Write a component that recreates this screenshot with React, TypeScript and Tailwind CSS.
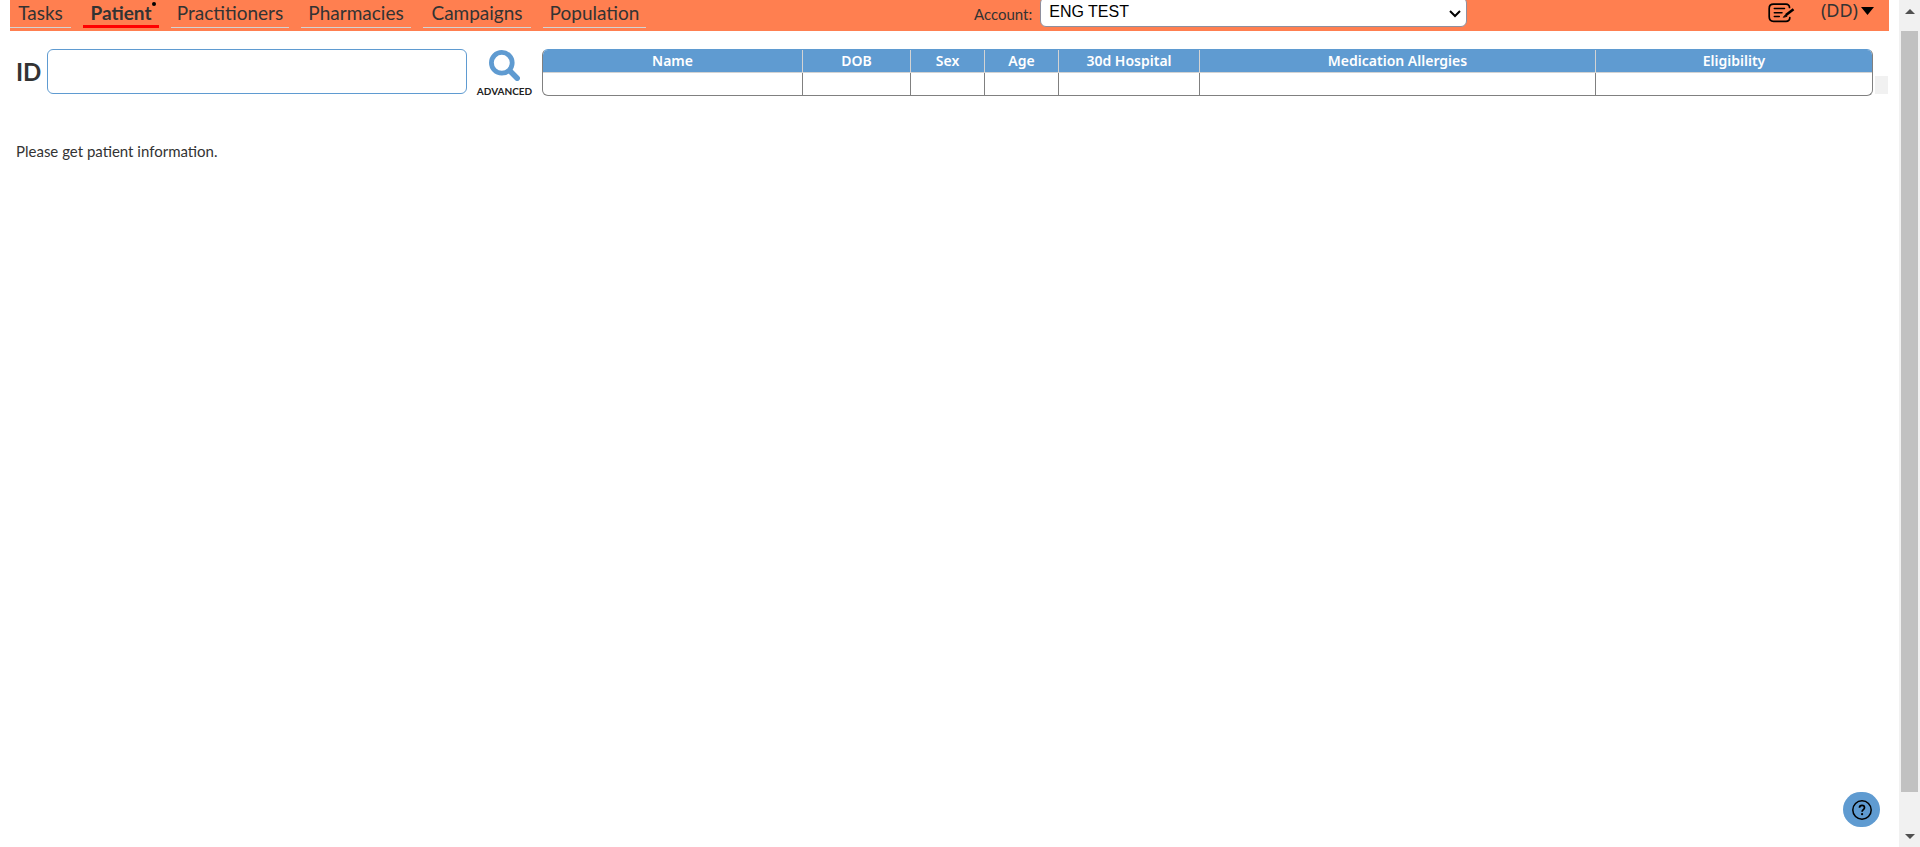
import { useState } from "react";

const tabs = [
  { name: "Tasks", width: "w-[61px]" },
  { name: "Patient", width: "w-[76px]" },
  { name: "Practitioners", width: "w-[118px]" },
  { name: "Pharmacies", width: "w-[110px]" },
  { name: "Campaigns", width: "w-[108px]" },
  { name: "Population", width: "w-[103px]" },
];

const columns = [
  { name: "Name", width: "w-[259px]" },
  { name: "DOB", width: "w-[108px]" },
  { name: "Sex", width: "w-[74px]" },
  { name: "Age", width: "w-[74px]" },
  { name: "30d Hospital", width: "w-[141px]" },
  { name: "Medication Allergies", width: "w-[396px]" },
  { name: "Eligibility", width: "w-[277px]" },
];

function TabBar() {
  const [active, setActive] = useState("Patient");
  return (
    <nav className="flex gap-3">
      {tabs.map((tab) => {
        const selected = tab.name === active;
        return (
          <a
            key={tab.name}
            href={`#${tab.name.toLowerCase()}`}
            onClick={() => setActive(tab.name)}
            aria-current={selected ? "page" : undefined}
            className={`relative flex h-7 justify-center whitespace-nowrap text-[19px] leading-[26px] ${tab.width} ${
              selected ? "border-b-3 border-[#ff0000] font-bold" : "border-b border-[#d3d3d3]"
            }`}
          >
            {tab.name}
            {selected && <span className="absolute top-[2px] right-[3px] size-1 rounded-full bg-black" />}
          </a>
        );
      })}
    </nav>
  );
}

function EditIcon() {
  return (
    <svg viewBox="0 0 27 20" className="h-5 w-[27px]" fill="none" stroke="black" strokeLinecap="round" strokeLinejoin="round">
      <path d="M21.5 4.5C21.5 2.3 20.2 1.2 18 1.2H5.5C2.5 1.2 1.2 2.6 1.2 5.4v8.4c0 3 1.3 4.5 4.3 4.5H18c2.5 0 3.700-1.200 3.800-3.600" strokeWidth="1.700" />
      <path d="M6.300 5.600h10.200M6.300 9.700h7.700M6.300 13.500h5" strokeWidth="1.500" />
      <path d="M18 12l7.500-5.700" strokeWidth="2.600" strokeLinecap="butt" />
      <path d="M15.600 14l2-2.300 1 1.400z" fill="black" strokeWidth="1" />
    </svg>
  );
}

function Header() {
  return (
    <header className="flex h-[31px] items-start bg-[#ff7f50]">
      <div className="flex-16">
        <TabBar />
      </div>
      <div className="flex items-start">
        <label htmlFor="account" className="mr-2 text-[15px] leading-7">
          Account:
        </label>
        <div className="relative -mt-[3px]">
          <select
            id="account"
            className="block h-[30px] w-[427px] appearance-none rounded-md border border-[#8f8f9d] bg-white px-2 font-['Liberation_Sans',Arial,sans-serif] text-base text-black"
          >
            <option>ENG TEST</option>
          </select>
          <svg
            viewBox="0 0 12 8"
            className="pointer-events-none absolute top-[13px] right-[6px] h-2 w-3"
            fill="none"
            stroke="black"
            strokeWidth="2"
          >
            <path d="M1 1l5 5 5-5" />
          </svg>
        </div>
      </div>
      <div className="flex-7">
        <div className="flex items-start justify-end gap-[26px] pr-[15px]">
          <button type="button" aria-label="Notes" className="mt-[3px] h-5">
            <EditIcon />
          </button>
          <button
            type="button"
            className="flex items-center gap-[3px] font-['Noto_Sans',sans-serif] text-lg leading-5"
          >
            (DD)
            <svg viewBox="0 0 13 8" className="mt-[2px] h-2 w-[13px]">
              <path d="M0 0h13L6.500 8z" fill="black" />
            </svg>
          </button>
        </div>
      </div>
    </header>
  );
}

function SummaryTable() {
  return (
    <div className="min-w-0 flex-1 overflow-hidden rounded-md border border-[#808080] border-t-[#5f9bd1]">
      <table className="w-full table-fixed border-separate border-spacing-0">
        <thead>
          <tr>
            {columns.map((column) => (
              <th
                key={column.name}
                className={`h-[23px] border-b border-l border-[#d3d3d3] bg-[#5f9bd1] p-0 font-['Noto_Sans',sans-serif] text-sm leading-5 font-semibold text-white first:border-l-0 ${column.width}`}
              >
                {column.name}
              </th>
            ))}
          </tr>
        </thead>
        <tbody>
          <tr>
            {columns.map((column) => (
              <td key={column.name} className="h-[22px] border-l border-[#808080] p-0 first:border-l-0" />
            ))}
          </tr>
        </tbody>
      </table>
    </div>
  );
}

function Scrollbar() {
  return (
    <div className="flex w-[21px] flex-col items-center bg-[#f1f1f1]" aria-hidden="true">
      <div className="flex h-[31px] items-start pt-[9px]">
        <svg viewBox="0 0 10 5" className="h-[5px] w-[10px]">
          <path d="M0 5h10L5 0z" fill="#505050" />
        </svg>
      </div>
      <div className="w-[17px] flex-1 bg-[#c1c1c1]" />
      <div className="flex h-[55px] items-end pb-2">
        <svg viewBox="0 0 10 5" className="h-[5px] w-[10px]">
          <path d="M0 0h10L5 5z" fill="#505050" />
        </svg>
      </div>
    </div>
  );
}

export default function App() {
  return (
    <div className="flex h-screen bg-white font-['Lato',sans-serif] text-[#333333]">
      <div className="min-w-0 flex-1 px-[10px]">
        <Header />
        <main>
          <div className="flex items-start pt-[18px] pl-[6px]">
            <label htmlFor="patient-id" className="w-[31px] text-2xl leading-[45px] font-bold">
              ID
            </label>
            <input
              id="patient-id"
              type="text"
              className="h-[45px] w-[420px] rounded-md border border-[#5f9bd1] bg-white px-3 text-lg outline-none"
            />
            <button type="button" className="flex w-[75px] flex-col items-center pt-px text-[#222222]">
              <svg viewBox="0 0 31 31" className="size-[31px]" fill="none" stroke="#5f9bd1">
                <circle cx="12.800" cy="12.800" r="10.400" strokeWidth="4.800" />
                <path d="M21.500 21.500l6.700 6.700" strokeWidth="5.500" strokeLinecap="round" />
                <path d="M19.500 19.500l3 3" strokeWidth="3" />
              </svg>
              <span className="text-[10px] leading-5 font-bold">ADVANCED</span>
            </button>
            <SummaryTable />
            <div className="mt-[27px] mr-px ml-[2px] h-[18px] w-[13px] bg-[#f1f1f1]" />
          </div>
          <p className="mt-10 pl-[6px] text-[15px] leading-5">Please get patient information.</p>
        </main>
      </div>
      <Scrollbar />
      <button
        type="button"
        aria-label="Help"
        className="fixed right-10 bottom-5 flex h-[35px] w-[37px] items-center justify-center rounded-full bg-[#5f9bd1]"
      >
        <svg viewBox="0 0 20 20" className="size-5" fill="none" stroke="black" strokeWidth="1.500">
          <circle cx="10" cy="10" r="9.200" />
          <path d="M7.500 7.800C7.500 6.300 8.600 5.400 10 5.400s2.500.9 2.500 2.300c0 1.900-2.400 2-2.400 4.100" strokeWidth="1.700" />
          <circle cx="10.100" cy="14.200" r="1.100" fill="black" stroke="none" />
        </svg>
      </button>
    </div>
  );
}
